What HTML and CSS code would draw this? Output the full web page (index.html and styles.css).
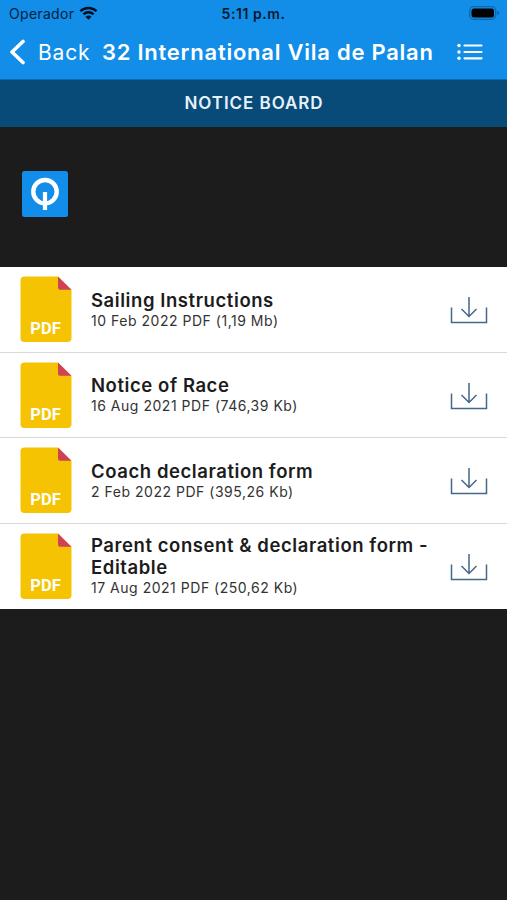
FILE: index.html
```html
<!DOCTYPE html>
<html lang="en">
<head>
<meta charset="utf-8">
<title>Notice Board</title>
<link rel="stylesheet" href="styles.css">
</head>
<body>
<svg class="defs" width="0" height="0" aria-hidden="true">
  <symbol id="file" viewBox="0 0 52 67">
    <path d="M4.500 0.500H38L51.500 14V62a4 4 0 0 1-4 4h-43a4 4 0 0 1-4-4V4.500a4 4 0 0 1 4-4Z" fill="#f5c301"/>
    <path d="M38 0.500L51.500 13.700H40a2 2 0 0 1-2-2Z" fill="#cf4253"/>
  </symbol>
  <symbol id="download" viewBox="0 0 38 28">
    <path d="M1.500 11.500V26.500H36.500V11.500M19 1V20.500M11.500 13L19 20.500L26.500 13" fill="none" stroke="#456789" stroke-width="1.500"/>
  </symbol>
</svg>
<header class="top">
  <div class="status">
    <div class="carrier"><span class="operator">Operador</span>
      <svg width="19" height="14" viewBox="0 0 19 14"><path d="M1.400 5.200a11.800 11.800 0 0 1 16.200 0M4.500 8.300a7.400 7.400 0 0 1 10 0" fill="none" stroke="#03111f" stroke-width="2.500"/><path d="M6.500 10.700a4.600 4.600 0 0 1 6 0L9.500 13.700Z" fill="#03111f"/></svg>
    </div>
    <div class="clock">5:11 p.m.</div>
    <svg class="battery" width="31" height="14" viewBox="0 0 31 14"><rect x="0.700" y="0.700" width="26" height="12.600" rx="4" fill="none" stroke="#0b68ad" stroke-width="1.300"/><rect x="2.500" y="2.500" width="22.500" height="9" rx="2.500" fill="#000"/><path d="M28.300 4.700q2 .8 2 2.300t-2 2.300Z" fill="#0b68ad"/></svg>
  </div>
  <nav class="bar">
    <svg class="chevron" width="17" height="26" viewBox="0 0 17 26"><path d="M14 2.500L3 13L14 23.500" fill="none" stroke="#fff" stroke-width="3.600" stroke-linecap="round" stroke-linejoin="round"/></svg>
    <span class="back">Back</span>
    <h1 class="title">32 International Vila de Palan</h1>
    <svg class="menu" width="26" height="18" viewBox="0 0 26 18"><g fill="#fff"><circle cx="2" cy="2.500" r="1.700"/><circle cx="2" cy="9" r="1.700"/><circle cx="2" cy="15.300" r="1.700"/></g><path d="M7.500 2.500H24.500M7.500 9H24.500M7.500 15.300H24.500" stroke="#fff" stroke-width="2.200" stroke-linecap="round"/></svg>
  </nav>
</header>
<h2 class="section">NOTICE BOARD</h2>
<div class="brand">
  <svg width="46" height="46" viewBox="0 0 46 46"><rect width="46" height="46" rx="2.500" fill="#128eea"/><circle cx="23" cy="20.700" r="11.700" fill="none" stroke="#fff" stroke-width="4.400"/><path d="M23 21V39" stroke="#fff" stroke-width="4.200"/></svg>
</div>
<main class="list">
  <article class="row">
    <div class="file"><svg width="52" height="67"><use href="#file"/></svg><span class="ext">PDF</span></div>
    <div class="info"><h3 class="name">Sailing Instructions</h3><p class="meta">10 Feb 2022 PDF (1,19 Mb)</p></div>
    <svg class="download" width="38" height="28"><use href="#download"/></svg>
  </article>
  <article class="row">
    <div class="file"><svg width="52" height="67"><use href="#file"/></svg><span class="ext">PDF</span></div>
    <div class="info"><h3 class="name">Notice of Race</h3><p class="meta">16 Aug 2021 PDF (746,39 Kb)</p></div>
    <svg class="download" width="38" height="28"><use href="#download"/></svg>
  </article>
  <article class="row">
    <div class="file"><svg width="52" height="67"><use href="#file"/></svg><span class="ext">PDF</span></div>
    <div class="info"><h3 class="name">Coach declaration form</h3><p class="meta">2 Feb 2022 PDF (395,26 Kb)</p></div>
    <svg class="download" width="38" height="28"><use href="#download"/></svg>
  </article>
  <article class="row">
    <div class="file"><svg width="52" height="67"><use href="#file"/></svg><span class="ext">PDF</span></div>
    <div class="info"><h3 class="name">Parent consent &amp; declaration form -<br>Editable</h3><p class="meta">17 Aug 2021 PDF (250,62 Kb)</p></div>
    <svg class="download" width="38" height="28"><use href="#download"/></svg>
  </article>
</main>
</body>
</html>
```
FILE: styles.css
```css
* { box-sizing: border-box; margin: 0; padding: 0; }
body {
  height: 900px;
  overflow: hidden;
  background: #1c1c1c;
  font-family: Inter, "Open Sans", sans-serif;
  color: #1c1c1c;
}
svg { display: block; flex: none; }
.defs { position: absolute; }
.top { height: 79px; background: #128de8; }
.status {
  height: 28px;
  display: grid;
  grid-template-columns: 1fr auto 1fr;
  align-items: center;
  padding: 0 7px 1px 9px;
  color: #03233d;
  font-size: 14px;
}
.carrier { display: flex; align-items: center; gap: 5px; }
.carrier svg { margin-top: -2px; }
.operator { letter-spacing: 0.3px; }
.clock { margin-right: 2px; font-weight: 600; color: #041a2c; letter-spacing: 0.55px; }
.battery { justify-self: end; margin-top: -1px; }
.bar { height: 51px; display: flex; align-items: center; padding: 0 24px 3px 9px; color: #fff; }
.back { width: 64px; margin-left: 12px; font-size: 21px; letter-spacing: 0.8px; }
.title { flex: 1; white-space: nowrap; font-size: 22px; font-weight: 600; letter-spacing: 0.75px; }
.section {
  height: 48px;
  display: flex;
  align-items: center;
  justify-content: center;
  padding: 0 0 2px 1px;
  background: #084b79;
  border-top: 1px solid #0b6cb1;
  color: #e6f1fa;
  font-size: 17px;
  font-weight: 600;
  letter-spacing: 0.95px;
}
.brand { height: 140px; padding: 44px 22px; }
.list { background: #fff; }
.row {
  height: 85.5px;
  display: flex;
  align-items: center;
  padding: 1px 19px 0 20px;
  border-bottom: 1px solid #d9d9d9;
}
.row:last-child { border-bottom: 0; padding-top: 0; }
.file { position: relative; }
.ext {
  position: absolute;
  left: 0;
  right: 1px;
  bottom: 5px;
  text-align: center;
  color: #fff;
  font: 700 16.5px/18px Roboto, "Open Sans", sans-serif;
}
.info { flex: 1; margin-left: 19px; white-space: nowrap; }
.name { font-size: 18.5px; line-height: 22px; font-weight: 600; letter-spacing: 0.57px; }
.meta { font-size: 14px; line-height: 20px; color: #333; letter-spacing: 0.52px; }
.download { margin-top: 1px; }
```
